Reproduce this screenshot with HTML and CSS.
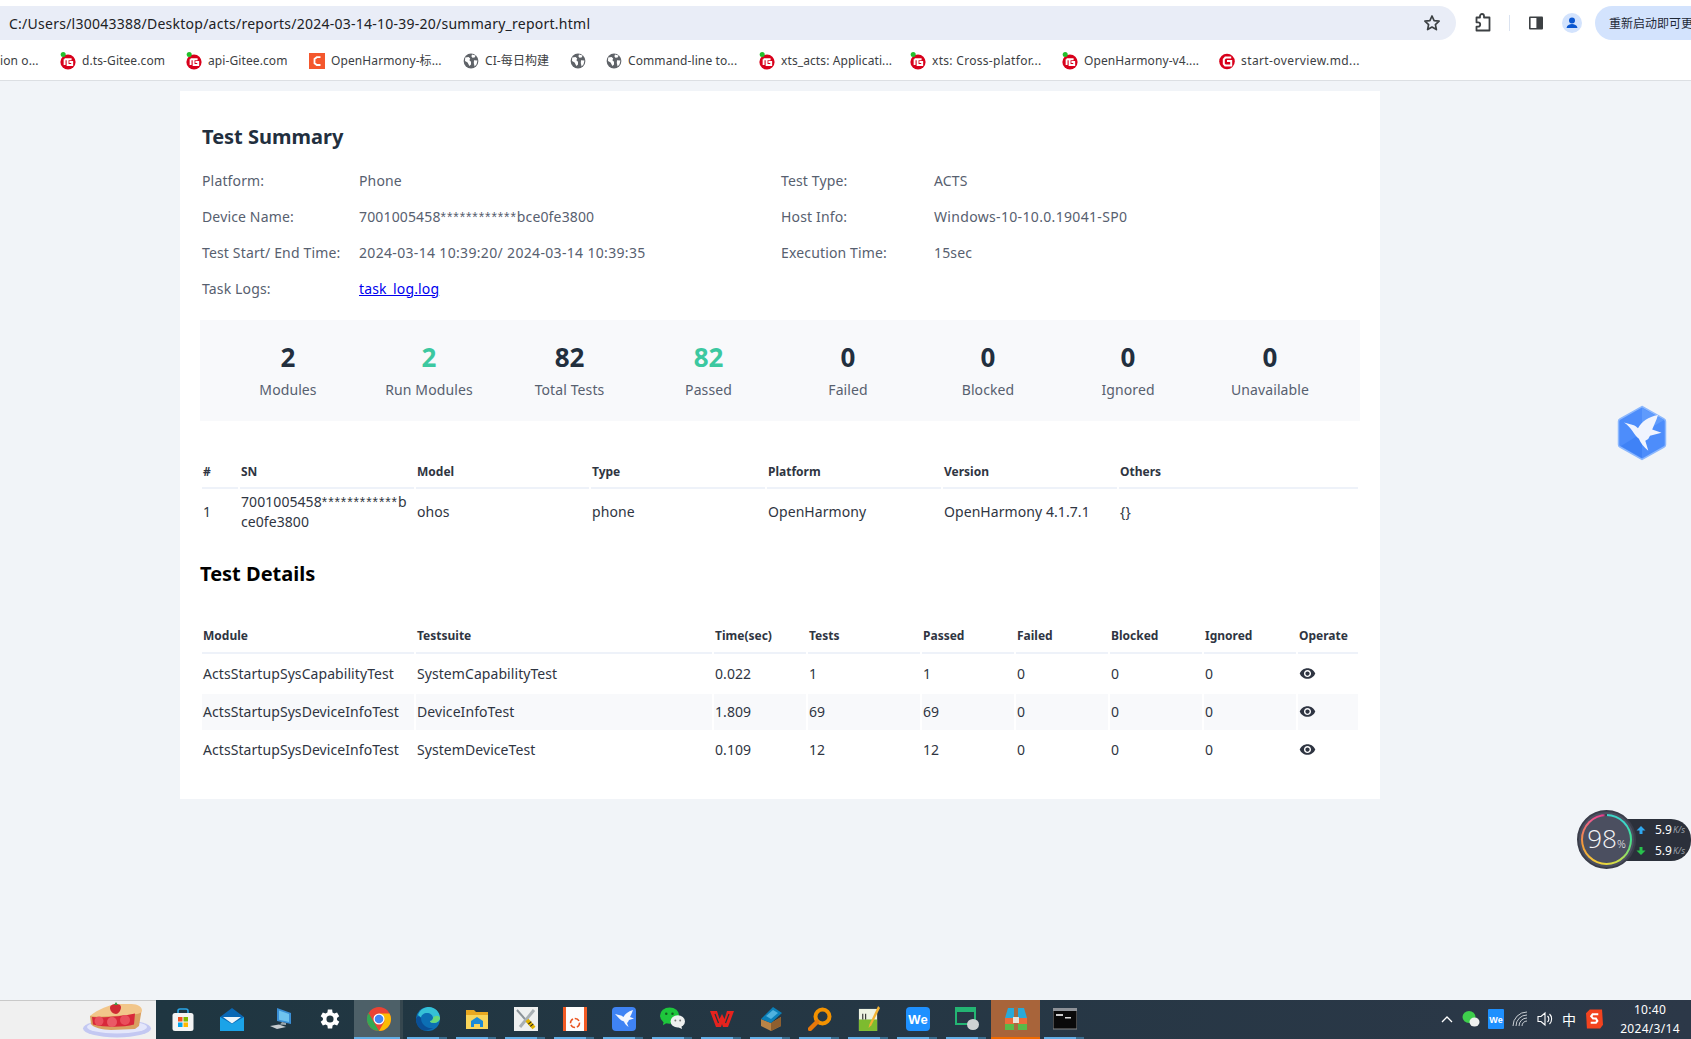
FILE: index.html
```html
<!DOCTYPE html>
<html lang="en">
<head>
<meta charset="utf-8">
<title>Test Summary</title>
<link rel="stylesheet" href="styles.css">
</head>
<body>
<svg class="sprite" aria-hidden="true">
  <symbol id="g-red" viewBox="0 0 16 18"><circle cx="8" cy="10" r="7.6" fill="#d8001b"/><path d="M4.6 7.2h7M7.6 7.2v5.8h4.6v-3H9.4" fill="none" stroke="#fff" stroke-width="1.9"/><path d="M4.6 7.2v5.8" fill="none" stroke="#fff" stroke-width="1.9"/><circle cx="3.2" cy="2.6" r="2.5" fill="#22c02c"/></symbol>
  <symbol id="g-plain" viewBox="0 0 16 18"><circle cx="8" cy="9.5" r="7.8" fill="#d8001b"/><path d="M12.2 5.6H6.4L4.8 7.4v4.4l1.4 1.6h6V9H8" fill="none" stroke="#fff" stroke-width="2"/></symbol>
  <symbol id="globe" viewBox="0 0 16 16"><circle cx="8" cy="8" r="7.4" fill="#5f6368"/><path d="M2.2 4.4 5.6 4l1.6 1.4-.8 1.8 1.6 1.6v2.6L6.4 13 4.6 9.4 2 8zM9 1.4l3.6 1-1 2.2-2.2.2-1-1.6zM11 7.2l3.4.2-.8 3.8-2 2.2-.8-3.4z" fill="#fff"/></symbol>
  <symbol id="eye" viewBox="0 0 24 24"><path d="M12 4.5C7 4.5 2.73 7.61 1 12c1.73 4.39 6 7.5 11 7.5s9.27-3.11 11-7.5c-1.73-4.39-6-7.5-11-7.5zM12 17c-2.76 0-5-2.24-5-5s2.24-5 5-5 5 2.24 5 5-2.24 5-5 5zm0-8c-1.66 0-3 1.34-3 3s1.34 3 3 3 3-1.34 3-3-1.34-3-3-3z"/></symbol>
</svg>

<header class="chrome">
  <div class="toolbar">
    <div class="omnibox">
      <span class="url">C:/Users/l30043388/Desktop/acts/reports/2024-03-14-10-39-20/summary_report.html</span>
      <svg class="star" viewBox="0 0 18 18" width="18" height="18"><path d="M9 2l2.100 4.600 5 .6-3.700 3.400 1 5L9 13.100 4.600 15.600l1-5L1.900 7.200l5-.6z" fill="none" stroke="#3c4043" stroke-width="1.700" stroke-linejoin="round"/></svg>
    </div>
    <svg class="tool-ext" viewBox="0 0 18 20" width="18" height="20"><path d="M2.500 4.500h3.500V3a2 2 0 0 1 4 0v1.500h5.500v13h-13v-3.800h1.500a2 2 0 0 0 0-4.400H2.500z" fill="none" stroke="#3c4043" stroke-width="1.800" stroke-linejoin="round"/></svg>
    <span class="tool-sep"></span>
    <svg class="tool-panel" viewBox="0 0 16 16" width="16" height="16"><rect x="1" y="1.500" width="14" height="13" rx="1" fill="#3c4043"/><rect x="2.600" y="3" width="5.800" height="10" fill="#fff"/></svg>
    <svg class="tool-profile" viewBox="0 0 20 20" width="20" height="20"><circle cx="10" cy="10" r="10" fill="#d3e3fd"/><circle cx="10" cy="7.500" r="3" fill="#0b57d0"/><path d="M4.500 15c.6-3 3-4 5.500-4s4.900 1 5.500 4z" fill="#0b57d0"/></svg>
    <div class="relaunch">重新启动即可更</div>
  </div>
  <nav class="bookmarks">
    <span class="bm bm-cut"><span class="bm-text">ion o...</span></span>
    <span class="bm"><svg class="bm-icon"><use href="#g-red"/></svg><span class="bm-text">d.ts-Gitee.com</span></span>
    <span class="bm"><svg class="bm-icon"><use href="#g-red"/></svg><span class="bm-text">api-Gitee.com</span></span>
    <span class="bm"><svg class="bm-icon" viewBox="0 0 16 16"><rect width="16" height="16" fill="#f4572d"/><path d="M11.500 4.200H7.800L5.500 6v4.200l2.300 1.800h3.700" fill="none" stroke="#fff" stroke-width="1.800"/></svg><span class="bm-text">OpenHarmony-标...</span></span>
    <span class="bm"><svg class="bm-icon"><use href="#globe"/></svg><span class="bm-text">CI-每日构建</span></span>
    <span class="bm"><svg class="bm-icon"><use href="#globe"/></svg></span>
    <span class="bm"><svg class="bm-icon"><use href="#globe"/></svg><span class="bm-text">Command-line to...</span></span>
    <span class="bm"><svg class="bm-icon"><use href="#g-red"/></svg><span class="bm-text">xts_acts: Applicati...</span></span>
    <span class="bm"><svg class="bm-icon"><use href="#g-red"/></svg><span class="bm-text">xts: Cross-platfor...</span></span>
    <span class="bm"><svg class="bm-icon"><use href="#g-red"/></svg><span class="bm-text">OpenHarmony-v4....</span></span>
    <span class="bm"><svg class="bm-icon"><use href="#g-plain"/></svg><span class="bm-text">start-overview.md...</span></span>
  </nav>
</header>

<main class="page">
  <section class="card">
    <h2 class="title-summary">Test Summary</h2>
    <div class="summary">
      <span>Platform:</span><span>Phone</span><span>Test Type:</span><span>ACTS</span>
      <span>Device Name:</span><span>7001005458<span class="mask">************</span>bce0fe3800</span><span>Host Info:</span><span class="val-num">Windows-10-10.0.19041-SP0</span>
      <span>Test Start/ End Time:</span><span class="val-num">2024-03-14 10:39:20/ 2024-03-14 10:39:35</span><span>Execution Time:</span><span>15sec</span>
      <span>Task Logs:</span><span><a class="log-link" href="#">task_log.log</a></span><span></span><span></span>
    </div>
    <div class="stats">
      <div class="stat"><div class="stat-num">2</div><div class="stat-label">Modules</div></div>
      <div class="stat"><div class="stat-num stat-ok">2</div><div class="stat-label">Run Modules</div></div>
      <div class="stat"><div class="stat-num">82</div><div class="stat-label">Total Tests</div></div>
      <div class="stat"><div class="stat-num stat-ok">82</div><div class="stat-label">Passed</div></div>
      <div class="stat"><div class="stat-num">0</div><div class="stat-label">Failed</div></div>
      <div class="stat"><div class="stat-num">0</div><div class="stat-label">Blocked</div></div>
      <div class="stat"><div class="stat-num">0</div><div class="stat-label">Ignored</div></div>
      <div class="stat"><div class="stat-num">0</div><div class="stat-label">Unavailable</div></div>
    </div>
    <table class="tbl tbl-device">
      <colgroup><col class="w36"><col class="w174"><col class="w173"><col class="w174"><col class="w174"><col class="w174"><col class="w239"></colgroup>
      <thead><tr><th>#</th><th>SN</th><th>Model</th><th>Type</th><th>Platform</th><th>Version</th><th>Others</th></tr></thead>
      <tbody><tr><td>1</td><td class="sn">7001005458<span class="mask">************</span>bce0fe3800</td><td>ohos</td><td>phone</td><td>OpenHarmony</td><td>OpenHarmony 4.1.7.1</td><td>{}</td></tr></tbody>
    </table>
    <h2 class="title-details">Test Details</h2>
    <table class="tbl tbl-details">
      <colgroup><col class="w212"><col class="w296"><col class="w92"><col class="w112"><col class="w92"><col class="w92"><col class="w92"><col class="w92"><col class="w60"></colgroup>
      <thead><tr><th>Module</th><th>Testsuite</th><th>Time(sec)</th><th>Tests</th><th>Passed</th><th>Failed</th><th>Blocked</th><th>Ignored</th><th>Operate</th></tr></thead>
      <tbody>
        <tr><td>ActsStartupSysCapabilityTest</td><td>SystemCapabilityTest</td><td>0.022</td><td>1</td><td>1</td><td>0</td><td>0</td><td>0</td><td><svg class="eye"><use href="#eye"/></svg></td></tr>
        <tr class="alt"><td>ActsStartupSysDeviceInfoTest</td><td>DeviceInfoTest</td><td>1.809</td><td>69</td><td>69</td><td>0</td><td>0</td><td>0</td><td><svg class="eye"><use href="#eye"/></svg></td></tr>
        <tr><td>ActsStartupSysDeviceInfoTest</td><td>SystemDeviceTest</td><td>0.109</td><td>12</td><td>12</td><td>0</td><td>0</td><td>0</td><td><svg class="eye"><use href="#eye"/></svg></td></tr>
      </tbody>
    </table>
  </section>

  <svg class="float-bird" viewBox="0 0 50 56" width="50" height="56">
    <path d="M25 1.500 47 14a3 3 0 0 1 1.500 2.600v22.800a3 3 0 0 1-1.500 2.600L25 54.500 3 42a3 3 0 0 1-1.500-2.600V16.600A3 3 0 0 1 3 14z" fill="#4d8dfb" stroke="#8db8fd" stroke-width="1.500"/>
    <path d="M25 3v25L47 15z" fill="#5f9bfc"/><path d="M25 28 4 41l21 12z" fill="#3f82f6"/>
    <path d="M7 17.500 16 20c2 .4 3.500 2 5 3.200C25 16 31 12 41 10c-1.800 6-4 10-5.800 14.500l9.300 3.200-11.500 3-1.800 3.300-2.900 1.700 3 10c-4.200-3.500-8-8-9.400-12C17 30 15 23 7 17.500z" fill="#f0f4fe"/>
  </svg>

  <div class="speed">
    <div class="speed-panel">
      <div class="speed-row"><svg class="arrow" viewBox="0 0 10 10" width="10" height="10"><path d="M5 1 9.500 5.500H6.500V9h-3V5.500H.5z" fill="#2fa8ef"/></svg><span class="speed-val">5.9</span><span class="speed-unit">K/s</span></div>
      <div class="speed-row"><svg class="arrow" viewBox="0 0 10 10" width="10" height="10"><path d="M5 9 .5 4.500h3V1h3v3.500h3z" fill="#27c24c"/></svg><span class="speed-val">5.9</span><span class="speed-unit">K/s</span></div>
    </div>
    <div class="speed-ball">
      <div class="speed-ring"></div>
      <div class="speed-num">98<span class="speed-pct">%</span></div>
    </div>
  </div>
</main>

<footer class="taskbar">
  <div class="tb-left">
    <svg class="pie" viewBox="0 0 70 36" width="70" height="36">
      <ellipse cx="35" cy="26.500" rx="34" ry="9" fill="#c3c8f2"/><ellipse cx="35" cy="25" rx="30" ry="6.500" fill="#e4e7fb"/>
      <path d="M8 14 52 5c6-1 8 3 7 7l-2 12-4 3-24 1c-8 0-19-3-20-6z" fill="#d9a060"/>
      <path d="M8 14c8-7 20-11 26-12h13c7 0 12 1 13 6 0 3-2 3-5 4-9 1-38 4-47 2z" fill="#f2c68a"/>
      <path d="M10 15c12 1 32-1 43-3.500l-1 11c-10 3-30 3-41 0z" fill="#d8283a"/>
      <circle cx="17" cy="19" r="4.500" fill="#ea4f5e"/><circle cx="30" cy="20" r="5" fill="#ea5a66"/><circle cx="43" cy="18" r="5" fill="#e94f5c"/>
      <path d="M28 6c0-3 3-4 6-4s5 1 5 3c0 4-3 7-5 7-3 0-6-3-6-6z" fill="#cf2b33"/><path d="M32 3l2-3 2 3z" fill="#3c9a44"/>
    </svg>
  </div>
  <div class="tb-main">
    <div class="tb-apps">
      <span class="app"><svg viewBox="0 0 24 24" width="24" height="24"><path d="M7 7V4a2 2 0 0 1 2-2h6a2 2 0 0 1 2 2v3" fill="none" stroke="#2aa7e8" stroke-width="1.600"/><rect x="1.500" y="6" width="21" height="18" rx="2.500" fill="#f3f4f4"/><rect x="7" y="10" width="4.500" height="4.500" fill="#f25022"/><rect x="12.500" y="10" width="4.500" height="4.500" fill="#7fba00"/><rect x="7" y="15.500" width="4.500" height="4.500" fill="#00a4ef"/><rect x="12.500" y="15.500" width="4.500" height="4.500" fill="#ffb900"/></svg></span>
      <span class="app"><svg viewBox="0 0 24 24" width="24" height="24"><path d="M12 1 0 10v14h24V10z" fill="#0a68b5"/><path d="M3 10h18l-9 6.500z" fill="#eef6fb"/><path d="M0 10l12 7 12-7v14H0z" fill="#1ba3e8"/></svg></span>
      <span class="app"><svg viewBox="0 0 24 24" width="24" height="24"><path d="M8 1l14 5v11l-14-3z" fill="#3a8fd6"/><path d="M10 3.500l10 3.500v8l-10-2.200z" fill="#6fc3ef"/><path d="M13 15l4 1v2l-6-.500z" fill="#9aa6ad"/><path d="M1 19l9-1.500 7 2.500-9 2z" fill="#c6ccd0"/></svg></span>
      <span class="app"><svg viewBox="0 0 24 24" width="26" height="26"><path d="M19.400 13a7.500 7.500 0 0 0 0-2l2.100-1.600-2-3.500-2.500 1a7.500 7.500 0 0 0-1.700-1L15 3.300h-4l-.4 2.600a7.500 7.500 0 0 0-1.700 1l-2.500-1-2 3.500L6.500 11a7.500 7.500 0 0 0 0 2l-2.100 1.600 2 3.500 2.500-1a7.500 7.500 0 0 0 1.700 1l.4 2.600h4l.4-2.600a7.500 7.500 0 0 0 1.700-1l2.500 1 2-3.500z" transform="translate(-1 0)" fill="#fff"/><circle cx="12" cy="12" r="3.300" fill="#22363f"/></svg></span>
      <span class="app app-active"><svg viewBox="0 0 24 24" width="24" height="24"><circle cx="12" cy="12" r="12" fill="#ea4335"/><path d="M12 24A12 12 0 0 1 1.600 6L7 15.500z" fill="#34a853"/><path d="M12 24l5.400-9.500-.4-2.500L24 12A12 12 0 0 1 12 24z" fill="#fbbc05"/><path d="M12 6.500h10.400A12 12 0 0 1 24 12h-8z" fill="#fbbc05"/><circle cx="12" cy="12" r="5.500" fill="#fff"/><circle cx="12" cy="12" r="4.300" fill="#4285f4"/></svg></span>
      <span class="app"><svg viewBox="0 0 24 24" width="24" height="24"><circle cx="12" cy="12" r="12" fill="#0c6fb4"/><path d="M2 8C4 2 9 0 13 0c6 0 11 5 11 11 0 3-3 5-6 5-2 0-4-1-4-2 2 0 3-2 3-3 0-3-3-5-6-5S5 8 5 11z" fill="#35c1d6"/><path d="M24 11c0 2-3 5-6 5s-4-1-4-2c2 0 3-2 3-3 2-3 6-3 7 0z" fill="#68d87a"/><path d="M5 11c0 6 5 11 12 10-3 2-8 3-11 2-4-2-6-7-6-11 1-3 4-3 5-1z" fill="#0a4f96"/></svg></span>
      <span class="app"><svg viewBox="0 0 24 24" width="24" height="24"><path d="M1 3h8l2 2h12v17H1z" fill="#e9a820"/><path d="M1 8h22v14H1z" fill="#f9d55a"/><path d="M12 10l6 4v6h-3v-3H9v3H6v-6z" fill="#1b8ad6"/></svg></span>
      <span class="app"><svg viewBox="0 0 24 24" width="24" height="24"><rect width="24" height="24" fill="#eef0f0"/><path d="M3 3l14 16" stroke="#8b9398" stroke-width="2"/><path d="M20 3 6 20" stroke="#a9b0b4" stroke-width="3"/><path d="M13 13l7 8" stroke="#e2b400" stroke-width="4"/><path d="M15.500 15.500l1.500 1.700 1.500 1.700" stroke="#222" stroke-width="4" stroke-dasharray="1 2"/></svg></span>
      <span class="app"><svg viewBox="0 0 24 24" width="24" height="24"><rect width="24" height="24" fill="#f15a24"/><rect x="3" width="18" height="24" fill="#fdfdfd"/><circle cx="12" cy="16" r="4.500" fill="none" stroke="#e95420" stroke-width="1.500" stroke-dasharray="5 1.800"/></svg></span>
      <span class="app"><svg viewBox="0 0 24 24" width="24" height="24"><rect width="24" height="24" rx="4" fill="#3f83f4"/><path d="M3 7l6 1.500c1 .2 1.500 1 2.500 1.500C13 7 16 4.500 21 3c-1 3-2 5-3 7l4 1.500-5 1.500-1 2-1 1 1.500 4c-2-1.500-4-3.500-4.500-5.500C7 13 6 9.500 3 7z" fill="#f4f7fe"/></svg></span>
      <span class="app"><svg viewBox="0 0 26 24" width="25" height="23"><ellipse cx="10" cy="9" rx="10" ry="8.500" fill="#1ec63c"/><path d="M4 14l-1 5 5-3z" fill="#1ec63c"/><circle cx="6.500" cy="7" r="1.300" fill="#135c20"/><circle cx="13" cy="7" r="1.300" fill="#135c20"/><ellipse cx="18.500" cy="15" rx="7.500" ry="6.500" fill="#eef0ef"/><path d="M22 19l1 4-4-2z" fill="#eef0ef"/><circle cx="16" cy="14" r="1" fill="#777"/><circle cx="21" cy="14" r="1" fill="#777"/></svg></span>
      <span class="app"><svg viewBox="0 0 24 20" width="24" height="20"><path d="M0 2h7l2.500 8L12 5l2.500 5L17 2h7l-6 16h-5l-1-3-1 3H6z" fill="#e6231e"/><path d="M5 5l3.500 9M19 5l-3.500 9M10 2h4" stroke="#22363f" stroke-width="1.200"/></svg></span>
      <span class="app"><svg viewBox="0 0 24 24" width="24" height="24"><path d="M2 12l10 4 10-6v9l-10 5-10-5z" fill="#b98447"/><path d="M12 16v8l10-5v-9z" fill="#8f5f2f"/><path d="M2 12 14 0l9 6-11 10z" fill="#0b7fb8"/><path d="M7 9 14 3l5 3-7 6z" fill="#4fb2df"/></svg></span>
      <span class="app"><svg viewBox="0 0 24 24" width="24" height="24"><circle cx="14.500" cy="9.500" r="7" fill="none" stroke="#f39200" stroke-width="4"/><path d="M9 15l-7 7" stroke="#e8780a" stroke-width="4.500" stroke-linecap="round"/></svg></span>
      <span class="app"><svg viewBox="0 0 24 26" width="23" height="25"><rect x="2" y="3" width="19" height="23" fill="#eef3e2"/><rect x="2" y="14" width="19" height="12" fill="#7dbb2f"/><path d="M6 8v6M9 8v6" stroke="#333" stroke-width="1.200"/><path d="M22 0 13 19l-1 4 3-3L24 2z" fill="#f2b233"/></svg></span>
      <span class="app"><svg viewBox="0 0 24 24" width="24" height="24"><rect width="24" height="24" rx="4" fill="#1e90ff"/><text x="12" y="17" class="we-text" text-anchor="middle">We</text></svg></span>
      <span class="app"><svg viewBox="0 0 24 24" width="24" height="24"><rect x="1" y="1" width="19" height="16" fill="none" stroke="#23b573" stroke-width="2"/><rect x="1" y="1" width="19" height="4" fill="#23b573"/><ellipse cx="18" cy="17.500" rx="6" ry="5.500" fill="#cfd3d4"/></svg></span>
      <span class="app app-rar"><svg viewBox="0 0 24 24" width="24" height="24"><path d="M4 1h16l3 10H1z" fill="#29a9d8"/><rect x="1" y="11" width="22" height="6" fill="#ea6a3a"/><rect x="1" y="17" width="22" height="6" fill="#59b949"/><rect x="10" y="0" width="4" height="24" fill="#a66a40"/><rect x="9" y="10" width="6" height="6" fill="#e8e3da"/></svg></span>
      <span class="app"><svg viewBox="0 0 24 22" width="24" height="22"><rect x="0" y="1" width="24" height="20" fill="#0a0a0a" stroke="#888"/><rect x="0" y="0" width="24" height="3" fill="#8e9298"/><rect x="3" y="6" width="7" height="2" fill="#ccc"/><rect x="12" y="9" width="6" height="1.500" fill="#ddd"/></svg></span>
    </div>
    <div class="tray">
      <svg class="tray-item" viewBox="0 0 14 14" width="14" height="14"><path d="M2 10l5-5 5 5" fill="none" stroke="#fff" stroke-width="1.300"/></svg>
      <svg class="tray-item" viewBox="0 0 18 18" width="18" height="18"><ellipse cx="7" cy="7" rx="6.500" ry="6" fill="#3ecf4c"/><ellipse cx="12.500" cy="12" rx="5" ry="4.500" fill="#eef0ef"/></svg>
      <svg class="tray-item" viewBox="0 0 16 20" width="16" height="20"><rect width="16" height="20" rx="1" fill="#1e90ff"/><text x="8" y="14" class="we-small" text-anchor="middle">We</text></svg>
      <svg class="tray-item" viewBox="0 0 16 16" width="16" height="16"><path d="M1 15A14 14 0 0 1 15 1M4 15A11 11 0 0 1 15 4M7 15a8 8 0 0 1 8-8M10 15a5 5 0 0 1 5-5" fill="none" stroke="#c9ced3" stroke-width="1"/></svg>
      <svg class="tray-item" viewBox="0 0 18 18" width="18" height="18"><path d="M2 6.500h3L9 3v12l-4-3.500H2z" fill="none" stroke="#fff" stroke-width="1.100"/><path d="M11.500 6a4 4 0 0 1 0 6M13.500 4a7 7 0 0 1 0 10" fill="none" stroke="#fff" stroke-width="1.100"/></svg>
      <span class="tray-ime">中</span>
      <svg class="tray-sogou" viewBox="0 0 18 20" width="17" height="20"><path d="M4 0h13l1 16-3 4H1L0 4z" fill="#f3431f"/><path d="M13 5H7L5.500 7l2 2.500h3L12 12l-1.500 2H5" fill="none" stroke="#fff" stroke-width="2.200"/></svg>
      <div class="clock"><div class="clock-time">10:40</div><div class="clock-date">2024/3/14</div></div>
    </div>
  </div>
</footer>
</body>
</html>
```
FILE: styles.css
```css
* { box-sizing: border-box; }
html, body { margin: 0; height: 100%; }
body {
  width: 1691px;
  height: 1039px;
  display: flex;
  flex-direction: column;
  overflow: hidden;
  font-family: "Noto Sans", "Noto Sans CJK SC", sans-serif;
  background: #f1f4f8;
}
.sprite { display: none; }

/* browser chrome */
.chrome { background: #fff; border-bottom: 1px solid #dcdfe3; height: 81px; flex: none; }
.toolbar { display: flex; align-items: center; height: 40px; padding-top: 6px; overflow: hidden; }
.omnibox {
  flex: none; display: flex; align-items: center; justify-content: space-between;
  width: 1456px; height: 34px; padding: 0 15px 0 9px;
  background: #e9edf7; border-radius: 0 17px 17px 0;
}
.url { font-size: 14px; letter-spacing: .25px; color: #202124; }
.star { display: block; }
.tool-ext { flex: none; margin-left: 18px; }
.tool-sep { flex: none; width: 1px; height: 16px; background: #dbe3f0; margin-left: 17px; }
.tool-panel { flex: none; margin-left: 18px; }
.tool-profile { flex: none; margin-left: 18px; }
.relaunch {
  flex: none; width: 96px; height: 34px; margin-left: 13px; padding-left: 14px;
  border-radius: 17px 0 0 17px; background: #d3e3fd;
  font: 12px/34px "Noto Sans CJK SC", sans-serif; color: #1f2937; white-space: nowrap;
}
.bookmarks { display: flex; align-items: center; height: 40px; padding-top: 1px; white-space: nowrap; }
.bm { display: flex; align-items: center; gap: 6px; margin-right: 20px; font-size: 12px; letter-spacing: .1px; color: #3c4043; }
.bm-icon { width: 16px; height: 18px; flex: none; }
.bm-text { display: block; line-height: 18px; }
.bm:nth-child(1) .bm-text { width: 40px; }
.bm:nth-child(2) .bm-text { width: 84px; }
.bm:nth-child(3) .bm-text { width: 81px; }
.bm:nth-child(4) .bm-text { width: 112px; }
.bm:nth-child(5) .bm-text { width: 65px; }
.bm:nth-child(7) .bm-text { width: 111px; }
.bm:nth-child(8) .bm-text { width: 109px; }
.bm:nth-child(9) .bm-text { width: 110px; letter-spacing: .3px; }
.bm:nth-child(10) .bm-text { width: 115px; }
.bm:nth-child(11) .bm-text { width: 116px; letter-spacing: .4px; }

/* page */
.page { position: relative; flex: 1; min-height: 0; padding: 10px 0 0 180px; }
.card { width: 1200px; background: #fff; padding: 32px 20px 29px; color: #57606f; }
.title-summary { margin: 0 0 12px 2px; font-size: 20px; line-height: 28px; font-weight: 700; color: #222f3e; }
.summary {
  display: grid; grid-template-columns: 157px 422px 153px 1fr; grid-auto-rows: 36px;
  align-items: center; margin-left: 2px; font-size: 14px; letter-spacing: .15px;
}
.summary > span { padding-bottom: 2px; }
.val-num { letter-spacing: .33px; }
.mask { font-family: "Liberation Sans", sans-serif; letter-spacing: .9px; }
.log-link { color: #0000ee; }
.stats {
  display: grid; grid-template-columns: 140px 142px 139px 139px 140px 140px 140px 144px;
  height: 101px; margin-top: 13px; padding: 20px 0 0 18px; background: #f8f9fb; text-align: center;
}
.stat-num { font-size: 26px; line-height: 34px; font-weight: 700; color: #222f3e; }
.stat-ok { color: #3cc8a0; }
.stat-label { margin-top: 6px; font-size: 14px; line-height: 20px; letter-spacing: .1px; color: #57606f; }
.tbl { width: 1160px; table-layout: fixed; border-collapse: separate; border-spacing: 2px; color: #2f3542; font-size: 14px; letter-spacing: .07px; }
.tbl-device { margin-top: 30px; }
.tbl th {
  height: 36px; padding: 0 1px; text-align: left; font-size: 12px; font-weight: 700; letter-spacing: 0;
  border-bottom: 2px solid #eef2f9;
}
.tbl-device th { padding-top: 2px; }
.tbl td { padding: 0 1px 2px; line-height: 19px; }
.tbl-device td { height: 43px; }
.tbl-details td { height: 36px; }
.sn { word-break: break-all; }
.alt td { background: #f8f9fb; }
.eye { display: block; width: 17px; height: 17px; fill: #2f3542; }
.title-details { margin: 24px 0 28px; font-size: 20px; line-height: 28px; font-weight: 700; color: #000; }
.w36 { width: 36px; } .w60 { width: 60px; } .w92 { width: 92px; }
.w112 { width: 112px; } .w173 { width: 173px; } .w174 { width: 174px; } .w212 { width: 212px; }
.w239 { width: 239px; } .w296 { width: 296px; }

/* floating desktop widgets */
.float-bird { position: absolute; left: 1617px; top: 324px; }
.speed { position: absolute; left: 1577px; top: 729px; width: 114px; height: 60px; }
.speed-panel {
  position: absolute; left: 40px; top: 9px; width: 74px; height: 42px; padding: 0 0 0 19px;
  background: #2b303b; border-radius: 0 20px 20px 0;
}
.speed-row { display: flex; align-items: center; height: 21px; color: #fff; }
.arrow { margin-right: 9px; flex: none; }
.speed-val { font-size: 12px; }
.speed-unit { margin-left: 1px; font-size: 9px; font-style: italic; color: #9aa0aa; }
.speed-ball { position: absolute; left: 0; top: 0; width: 59px; height: 59px; border-radius: 50%; background: #4b4f60; border: 2px solid #3a3d4a; }
.speed-ring {
  position: absolute; inset: 2px; border-radius: 50%;
  background: conic-gradient(#3a3e4d 0 2deg, #3cd6c8 2deg 50deg, #3fe08c 90deg, #c8e04c 150deg, #f5cf3a 200deg, #f39a3a 260deg, #ee5f8a 320deg, #e83c8c 352deg, #3a3e4d 358deg);
}
.speed-ring::after { content: ""; position: absolute; inset: 2px; border-radius: 50%; background: #4b4f60; }
.speed-num {
  position: absolute; inset: 0; display: flex; align-items: baseline; justify-content: center; padding-top: 11px;
  color: #f3f4f6; font-size: 26px; line-height: 30px; font-weight: 300; font-family: "Open Sans", sans-serif;
}
.speed-pct { font-size: 11px; line-height: 11px; }

/* taskbar */
.taskbar { display: flex; height: 39px; flex: none; }
.tb-left { width: 156px; background: #f0f0f0; border-top: 1px solid #c9c9c9; position: relative; }
.pie { position: absolute; left: 82px; top: 1px; }
.tb-main {
  flex: 1; display: flex; justify-content: space-between;
  background: linear-gradient(90deg, #1f3641, #2c3848);
}
.tb-apps { display: flex; padding-left: 2px; }
.app { position: relative; width: 49px; height: 39px; display: flex; align-items: center; justify-content: center; padding-bottom: 2px; }
.app::after { content: ""; position: absolute; left: 4px; right: 5px; bottom: 0; height: 2px; background: linear-gradient(90deg, #62aee6 80%, #3a6d8f 80%); }
.app:nth-child(-n+4)::after { display: none; }
.app-active { background: #4d6068; box-shadow: inset -3px 0 0 #36474f; }
.app-active::after { left: 0; right: 3px; background: #62aee6; }
.app-rar { background: #a8643a; }
.app-rar::after { left: 0; right: 0; background: #f06a00; }
.we-text { font: 700 13px "Liberation Sans", sans-serif; fill: #fff; }
.we-small { font: 700 9px "Liberation Sans", sans-serif; fill: #fff; }
.tray { display: flex; align-items: center; padding-bottom: 2px; }
.tray-item { margin-right: 8px; flex: none; }
.tray-ime { margin: 0 10px 0 0; font: 14px "Noto Sans CJK SC", sans-serif; color: #fff; }
.tray-sogou { flex: none; margin-right: 11px; }
.clock { width: 72px; text-align: center; color: #fff; font-size: 12px; line-height: 19px; letter-spacing: .3px; margin-right: 5px; }
```
